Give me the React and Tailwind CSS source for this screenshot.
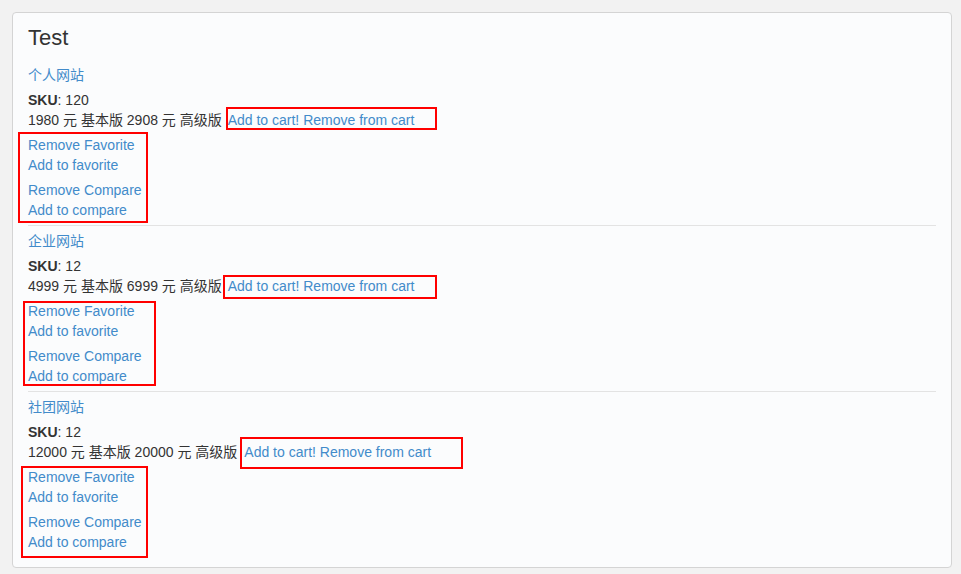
const ITEMS = [
  {
    title: '个人网站',
    sku: '120',
    price: '1980 元 基本版 2908 元 高级版 ',
    cartBox: 'left-[198px] top-[42px] w-[211px] h-[23px]',
    listBox: 'left-[-10px] top-[67px] w-[130px] h-[91px]',
  },
  {
    title: '企业网站',
    sku: '12',
    price: '4999 元 基本版 6999 元 高级版',
    cartBox: 'left-[195px] top-[44px] w-[214px] h-[24px]',
    listBox: 'left-[-5px] top-[70px] w-[133px] h-[85px]',
  },
  {
    title: '社团网站',
    sku: '12',
    price: '12000 元 基本版 20000 元 高级版',
    cartBox: 'left-[212px] top-[40px] w-[223px] h-[32px]',
    listBox: 'left-[-7px] top-[69px] w-[127px] h-[92px]',
  },
]

// pads the cart links so "Add" lands where the reference has it
const CART_OFFSET = ['ml-[2px]', 'ml-[6px]', 'ml-[7px]']

function Item({ item, index, last }) {
  return (
    <div>
      <div className="relative">
        <a href="#" className="block text-[#428bca]">{item.title}</a>
        <div className="mt-[5px]">
          <b>SKU</b>: {item.sku}
        </div>
        <div className="whitespace-nowrap">
          {item.price}
          <span className={CART_OFFSET[index]}>
            <a href="#" className="text-[#428bca]">Add to cart!</a>{' '}
            <a href="#" className="text-[#428bca]">Remove from cart</a>
          </span>
        </div>
        <div className="mt-[5px]">
          <a href="#" className="block w-fit text-[#428bca]">Remove Favorite</a>
          <a href="#" className="block w-fit text-[#428bca]">Add to favorite</a>
        </div>
        <div className="mt-[5px]">
          <a href="#" className="block w-fit text-[#428bca]">Remove Compare</a>
          <a href="#" className="block w-fit text-[#428bca]">Add to compare</a>
        </div>

        {/* annotation boxes drawn over the screenshot */}
        <div className={`pointer-events-none absolute border-2 border-[#ff0000] ${item.cartBox}`} />
        <div className={`pointer-events-none absolute border-2 border-[#ff0000] ${item.listBox}`} />
      </div>
      {!last && <div className="mt-[5px] mb-[5px] h-px bg-[#e3e3e3]" />}
    </div>
  )
}

export default function App() {
  return (
    <div className="min-h-screen bg-[#f2f2f2] pt-[12px] pl-[12px] font-['Liberation_Sans','Noto_Sans_CJK_SC',sans-serif] text-[14px] leading-[20px] text-[#333333]">
      <div className="w-[940px] h-[556px] rounded-[4px] border border-[#d4d4d4] bg-[#fbfcfd] px-[15px] pt-[13px] pb-[15px]">
        <h3 className="text-[22px] leading-[24px] text-[#333333]">Test</h3>
        <div className="mt-[15px]">
          {ITEMS.map((item, i) => (
            <Item key={item.title} item={item} index={i} last={i === ITEMS.length - 1} />
          ))}
        </div>
      </div>
    </div>
  )
}
